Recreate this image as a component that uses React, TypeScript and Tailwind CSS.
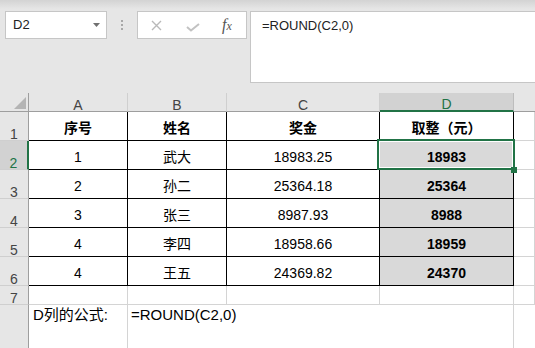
const GREEN = '#217346'

const data = [
  ['1', '武大', '18983.25', '18983'],
  ['2', '孙二', '25364.18', '25364'],
  ['3', '张三', '8987.93', '8988'],
  ['4', '李四', '18958.66', '18959'],
  ['4', '王五', '24369.82', '24370'],
]

function Toolbar() {
  return (
    <div className="flex h-[93px] items-start bg-[linear-gradient(to_bottom,#d3d3d3,#e6e6e6_9px)] pl-[5px] pt-[11px]">
      {/* name box */}
      <div className="flex h-[28px] w-[102px] items-center justify-between border border-[#c6c6c6] bg-white pl-[7px] pr-[6px] text-[13px] leading-[18px] text-[#222]">
        <span>D2</span>
        <svg width="7" height="4" viewBox="0 0 7 4">
          <path d="M0 0h7L3.5 4z" fill="#707070" />
        </svg>
      </div>

      <div className="ml-[14px] mt-[9px] flex w-[2px] flex-col gap-[2px]">
        <span className="h-[2px] w-[2px] bg-[#a8a8a8]" />
        <span className="h-[2px] w-[2px] bg-[#a8a8a8]" />
        <span className="h-[2px] w-[2px] bg-[#a8a8a8]" />
      </div>

      {/* cancel / enter / fx */}
      <div className="ml-[14px] flex h-[28px] w-[110px] items-center border border-[#c6c6c6] bg-white">
        <svg className="ml-[13px]" width="11" height="11" viewBox="0 0 11 11">
          <path d="M1 1l9 9M10 1l-9 9" stroke="#b9b9b9" strokeWidth="1.4" fill="none" />
        </svg>
        <svg className="ml-[24px] mt-[4px]" width="14" height="9" viewBox="0 0 14 9">
          <path d="M1 4l4 3.5L13 1" stroke="#c2c2c2" strokeWidth="2" fill="none" />
        </svg>
        <span className="ml-[22px] font-['Liberation_Serif',serif] text-[16px] italic leading-[18px] text-[#555]">
          f<span className="text-[12px]">x</span>
        </span>
      </div>

      {/* formula bar */}
      <div className="ml-[3px] h-[72px] flex-1 border border-r-0 border-[#c6c6c6] bg-white pl-[11px] pt-[5px] text-[13px] leading-[18px] text-[#222]">
        =ROUND(C2,0)
      </div>
    </div>
  )
}

function ColHead({ label, selected }: { label: string; selected?: boolean }) {
  return (
    <div
      className={`flex items-end justify-center border-r text-[14px] leading-[12px] ${
        selected
          ? 'border-b-2 border-r-[#bdbdbd] border-b-[#217346] bg-[#d2d2d2] text-[#217346]'
          : 'border-b border-r-[#cfcfcf] border-b-[#9e9e9e] bg-[#e6e6e6] text-[#444]'
      }`}
    >
      {label}
    </div>
  )
}

function RowHead({ label, selected, last }: { label: string; selected?: boolean; last?: boolean }) {
  return (
    <div
      className={`flex items-end justify-center text-[14px] leading-[12px] ${
        last ? '' : 'border-b border-b-[#cfcfcf]'
      } ${
        selected
          ? 'border-r-2 border-r-[#217346] bg-[#d2d2d2] text-[#217346]'
          : 'border-r border-r-[#9e9e9e] bg-[#e6e6e6] text-[#444]'
      }`}
    >
      {label}
    </div>
  )
}

function Cell({ children, bold, fill }: { children?: React.ReactNode; bold?: boolean; fill?: boolean }) {
  return (
    <div
      className={`flex items-end justify-center border-b border-r border-black pb-[3px] text-[14px] leading-[18px] ${
        bold ? 'font-bold' : ''
      } ${fill ? 'bg-[#d9d9d9]' : 'bg-white'}`}
    >
      {children}
    </div>
  )
}

function Blank() {
  return <div className="border-b border-r border-[#d4d4d4] bg-white" />
}

export default function App() {
  return (
    <div className="h-[348px] w-[535px] overflow-hidden bg-white font-[family-name:Liberation_Sans,Noto_Sans_CJK_SC,sans-serif] text-black">
      <Toolbar />

      <div className="relative grid grid-cols-[29px_99px_99px_153px_134px_1fr] grid-rows-[19px_repeat(6,29px)_19px_60px]">
        {/* column headers */}
        <div className="flex items-end justify-end border-b border-r border-[#9e9e9e] bg-[#e6e6e6] pb-[2px] pr-[2px]">
          <svg width="12" height="12" viewBox="0 0 12 12">
            <path d="M12 0V12H0z" fill="#b4b4b4" />
          </svg>
        </div>
        <ColHead label="A" />
        <ColHead label="B" />
        <ColHead label="C" />
        <ColHead label="D" selected />
        <div className="border-b border-[#9e9e9e] bg-[#e6e6e6]" />

        {/* row 1 */}
        <RowHead label="1" />
        <Cell bold>序号</Cell>
        <Cell bold>姓名</Cell>
        <Cell bold>奖金</Cell>
        <Cell bold>取整（元）</Cell>
        <Blank />

        {data.map((row, i) => (
          <div key={i} className="contents">
            <RowHead label={String(i + 2)} selected={i === 0} />
            <Cell>{row[0]}</Cell>
            <Cell>{row[1]}</Cell>
            <Cell>{row[2]}</Cell>
            <Cell bold fill>
              {row[3]}
            </Cell>
            <Blank />
          </div>
        ))}

        {/* row 7 */}
        <RowHead label="7" />
        <Blank />
        <Blank />
        <Blank />
        <Blank />
        <Blank />

        {/* row 8 */}
        <RowHead label="" last />
        <div className="border-r border-[#d4d4d4] pl-[4px] text-[15px] leading-[20px]">D列的公式:</div>
        <div className="col-span-3 border-r border-[#d4d4d4] pl-[3px] text-[15px] leading-[20px]">=ROUND(C2,0)</div>
        <div className="bg-white" />

        {/* active cell D2 */}
        <div className="absolute left-[377px] top-[46px] h-[31px] w-[138px] border-2 border-[#217346] shadow-[inset_0_0_0_1px_#fff]" />
        <div className="absolute left-[511px] top-[74px] h-[6px] w-[6px] bg-[#217346]" />
      </div>
    </div>
  )
}
